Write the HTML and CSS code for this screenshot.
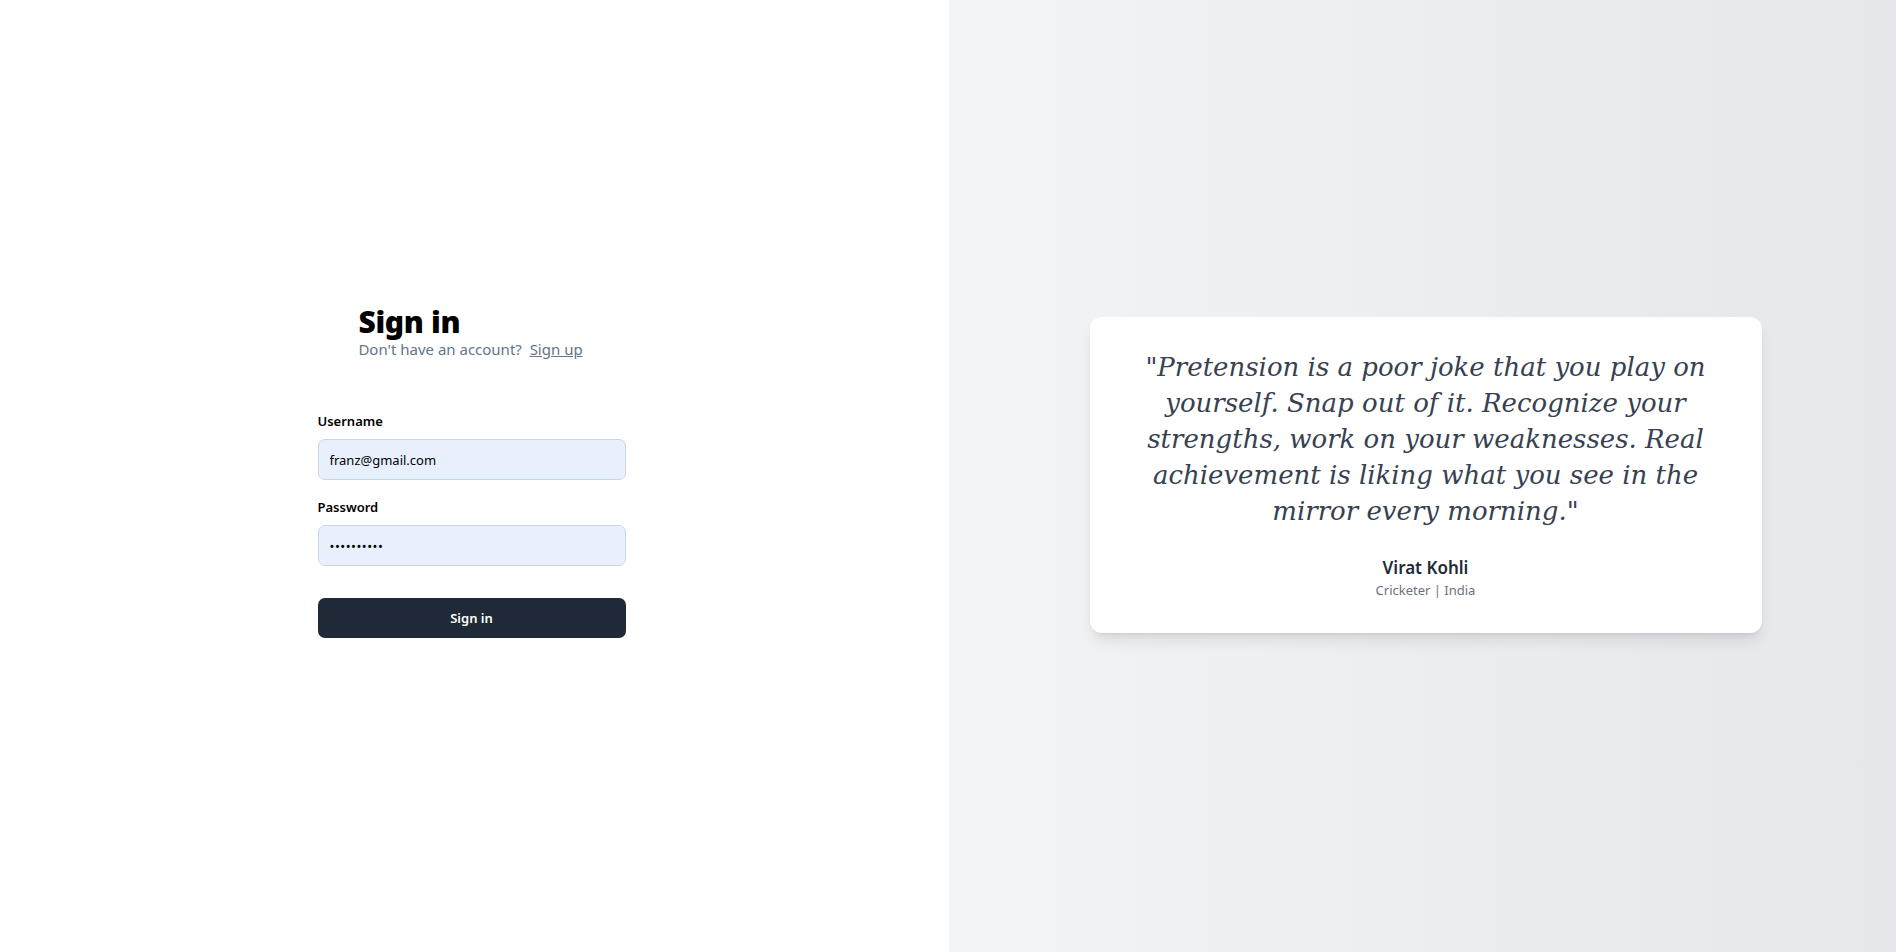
FILE: index.html
```html
<!DOCTYPE html>
<html lang="en">
<head>
<meta charset="utf-8">
<title>Sign in</title>
<link rel="stylesheet" href="styles.css">
</head>
<body>
<main class="page">
  <section class="left">
    <div class="signin">
      <div class="header">
        <h1 class="title">Sign in</h1>
        <p class="subtitle">Don't have an account?&nbsp; <a href="#" class="link">Sign up</a></p>
      </div>
      <form class="form">
        <label class="label" for="username">Username</label>
        <input class="input" id="username" type="text" value="franz@gmail.com">
        <label class="label label-gap" for="password">Password</label>
        <input class="input input-pass" id="password" type="password" value="1234567890">
        <button class="button" type="button">Sign in</button>
      </form>
    </div>
  </section>
  <section class="right">
    <div class="card">
      <blockquote class="quote">"Pretension is a poor joke that you play on yourself. Snap out of it. Recognize your strengths, work on your weaknesses. Real achievement is liking what you see in the mirror every morning."</blockquote>
      <div class="author">Virat Kohli</div>
      <div class="role">Cricketer | India</div>
    </div>
  </section>
</main>
</body>
</html>
```

FILE: styles.css
```css
* { box-sizing: border-box; }
html, body { margin: 0; padding: 0; }
body {
  font-family: "Noto Sans", "Open Sans", sans-serif;
  color: #111827;
  background: #ffffff;
}
.page {
  display: grid;
  grid-template-columns: 949px 1fr;
  height: 952px;
}
.left {
  background: #ffffff;
  display: flex;
  align-items: center;
  justify-content: center;
  padding-right: 6px;
}
.signin {
  width: 308px;
  display: flex;
  flex-direction: column;
  margin-top: -9px;
}
.header {
  align-self: center;
  margin-bottom: 51px;
  margin-left: -2px;
}
.title {
  margin: 0;
  font-size: 30px;
  line-height: 34px;
  font-weight: 900;
  color: #000000;
  letter-spacing: -0.3px;
}
.subtitle {
  margin: 0;
  font-size: 15px;
  line-height: 21px;
  color: #64748b;
}
.link {
  color: #64748b;
  text-decoration: underline;
}
.form {
  display: flex;
  flex-direction: column;
}
.label {
  font-size: 13px;
  line-height: 20px;
  font-weight: 600;
  color: #000000;
  margin-bottom: 8px;
}
.label-gap { margin-top: 17px; }
.input {
  height: 41px;
  border: 1px solid #cbd5e1;
  border-radius: 7px;
  background: #e8f0fe;
  padding: 0 11px;
  font-family: inherit;
  font-size: 13px;
  color: #000000;
  outline: none;
}
.input-pass {
  font-size: 13px;
  letter-spacing: 0.5px;
}
.button {
  margin-top: 32px;
  height: 40px;
  border: none;
  border-radius: 7px;
  background: #1f2937;
  color: #ffffff;
  font-family: inherit;
  font-size: 13px;
  font-weight: 600;
}
.right {
  background: linear-gradient(to right, #f3f4f6, #e5e7eb);
  display: flex;
  align-items: center;
  justify-content: center;
  padding-left: 6px;
}
.card {
  width: 672px;
  background: #ffffff;
  border-radius: 12px;
  box-shadow: 0 10px 15px -3px rgba(0,0,0,0.1), 0 4px 6px -4px rgba(0,0,0,0.1);
  padding: 32px 48px 33px;
  text-align: center;
  margin-top: -2px;
}
.quote {
  margin: 0;
  font-family: "DejaVu Serif", serif;
  font-style: italic;
  font-size: 26px;
  line-height: 36px;
  color: #374151;
}
.author {
  margin-top: 27px;
  font-size: 17px;
  line-height: 24px;
  font-weight: 600;
  color: #1f2937;
}
.role {
  font-size: 13px;
  line-height: 20px;
  color: #6b7280;
}
```
